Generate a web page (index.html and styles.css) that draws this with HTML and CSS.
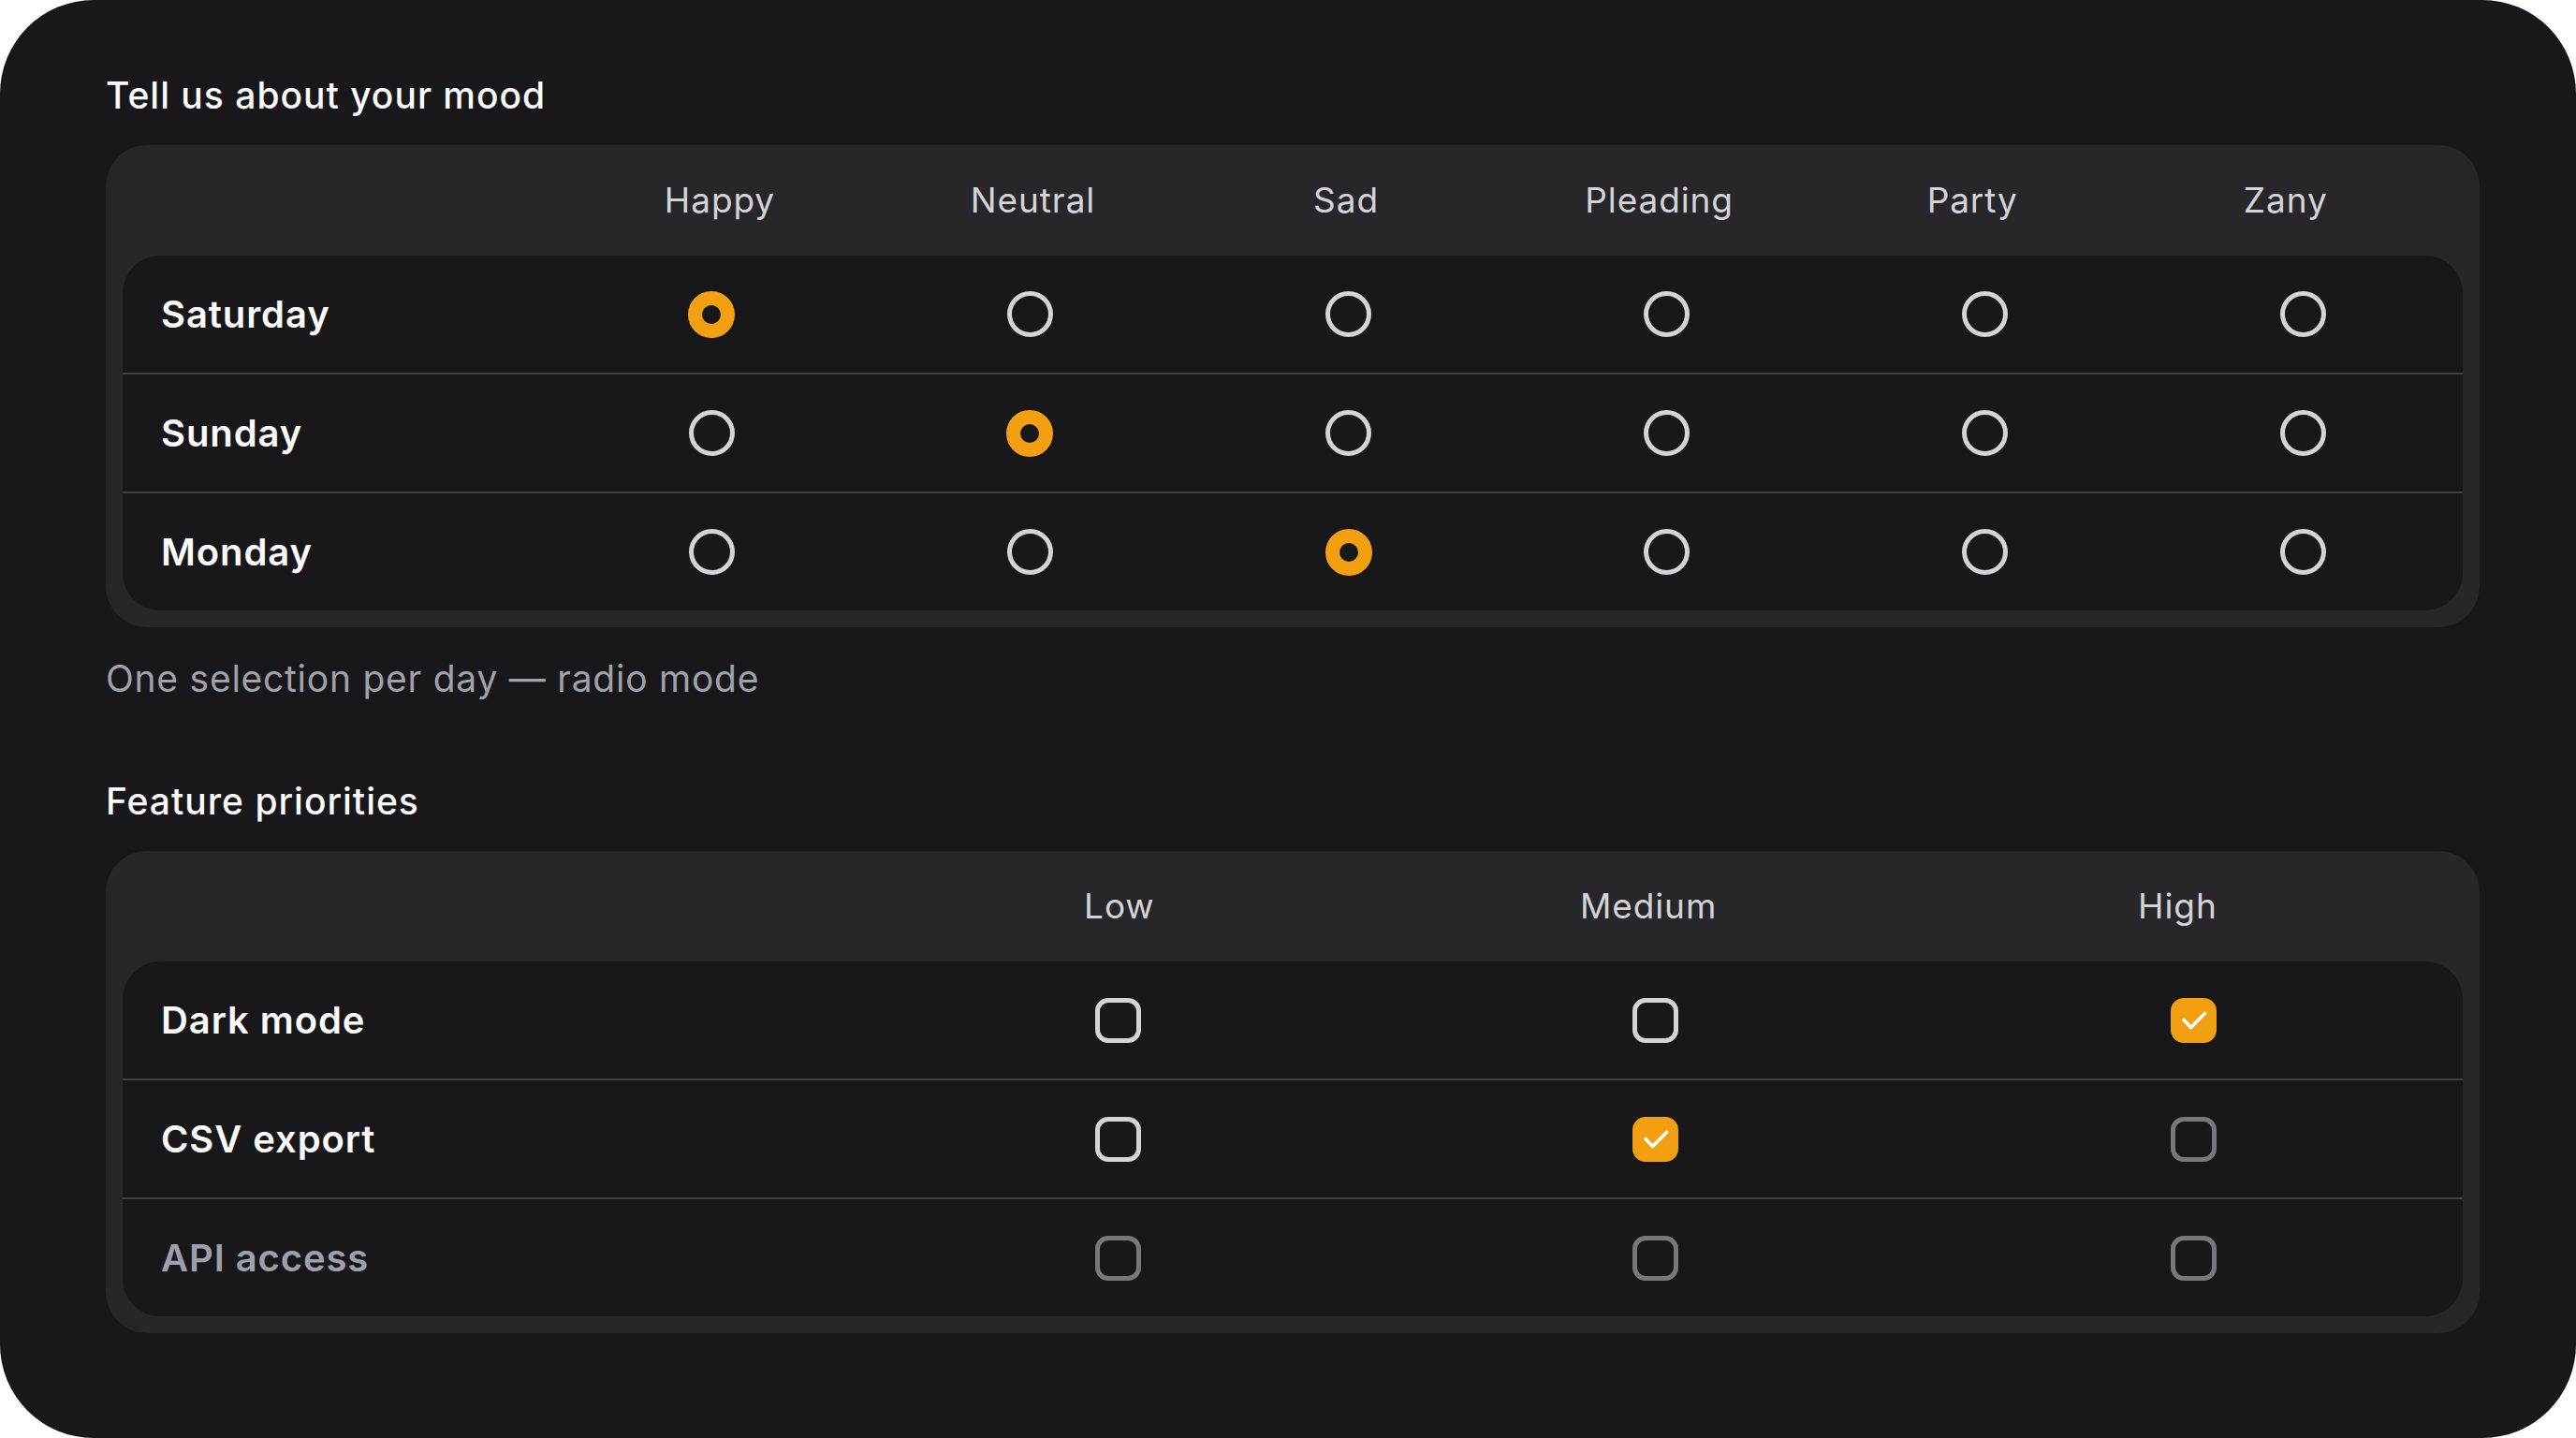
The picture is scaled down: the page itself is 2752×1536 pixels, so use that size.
FILE: index.html
```html
<!DOCTYPE html>
<html lang="en">
<head>
<meta charset="utf-8">
<title>Matrix inputs</title>
<link rel="stylesheet" href="styles.css">
</head>
<body>
<main class="card">
  <h2 class="section-title">Tell us about your mood</h2>
  <section class="panel">
    <div class="grid head mood">
      <span></span>
      <span class="col">Happy</span>
      <span class="col">Neutral</span>
      <span class="col">Sad</span>
      <span class="col">Pleading</span>
      <span class="col">Party</span>
      <span class="col">Zany</span>
    </div>
    <div class="rows">
      <div class="grid row mood">
        <span class="label">Saturday</span>
        <span class="cell"><span class="radio on"></span></span>
        <span class="cell"><span class="radio"></span></span>
        <span class="cell"><span class="radio"></span></span>
        <span class="cell"><span class="radio"></span></span>
        <span class="cell"><span class="radio"></span></span>
        <span class="cell"><span class="radio"></span></span>
      </div>
      <div class="grid row mood">
        <span class="label">Sunday</span>
        <span class="cell"><span class="radio"></span></span>
        <span class="cell"><span class="radio on"></span></span>
        <span class="cell"><span class="radio"></span></span>
        <span class="cell"><span class="radio"></span></span>
        <span class="cell"><span class="radio"></span></span>
        <span class="cell"><span class="radio"></span></span>
      </div>
      <div class="grid row mood">
        <span class="label">Monday</span>
        <span class="cell"><span class="radio"></span></span>
        <span class="cell"><span class="radio"></span></span>
        <span class="cell"><span class="radio on"></span></span>
        <span class="cell"><span class="radio"></span></span>
        <span class="cell"><span class="radio"></span></span>
        <span class="cell"><span class="radio"></span></span>
      </div>
    </div>
  </section>
  <p class="note">One selection per day — radio mode</p>

  <h2 class="section-title second">Feature priorities</h2>
  <section class="panel">
    <div class="grid head prio">
      <span></span>
      <span class="col">Low</span>
      <span class="col">Medium</span>
      <span class="col">High</span>
    </div>
    <div class="rows">
      <div class="grid row prio">
        <span class="label">Dark mode</span>
        <span class="cell"><span class="box"></span></span>
        <span class="cell"><span class="box"></span></span>
        <span class="cell"><span class="box on"><svg viewBox="0 0 48 48" width="48" height="48"><path d="M13 23.5 L20.5 31.5 L35.5 16.5" /></svg></span></span>
      </div>
      <div class="grid row prio">
        <span class="label">CSV export</span>
        <span class="cell"><span class="box"></span></span>
        <span class="cell"><span class="box on"><svg viewBox="0 0 48 48" width="48" height="48"><path d="M13 23.5 L20.5 31.5 L35.5 16.5" /></svg></span></span>
        <span class="cell"><span class="box off"></span></span>
      </div>
      <div class="grid row prio disabled">
        <span class="label">API access</span>
        <span class="cell"><span class="box off"></span></span>
        <span class="cell"><span class="box off"></span></span>
        <span class="cell"><span class="box off"></span></span>
      </div>
    </div>
  </section>
</main>
</body>
</html>
```
FILE: styles.css
```css
* { box-sizing: border-box; }

html, body {
  margin: 0;
  padding: 0;
  background: #ffffff;
}

body {
  width: 2752px;
  height: 1536px;
  font-family: Inter, "Noto Sans", "Liberation Sans", sans-serif;
}

.card {
  width: 2752px;
  height: 1536px;
  background: #18181b;
  border-radius: 100px;
  padding: 78px 103px 0 113px;
  display: flex;
  flex-direction: column;
}

.section-title {
  margin: 0 0 29px 0;
  font-size: 39px;
  line-height: 48px;
  font-weight: 500;
  color: #fafafa;
  letter-spacing: 1px;
}

.section-title.second {
  margin-top: 83px;
}

.note {
  margin: 31px 0 0 0;
  font-size: 39px;
  line-height: 48px;
  font-weight: 400;
  color: #a1a1aa;
  letter-spacing: 0.75px;
}

.panel {
  background: #27272a;
  border-radius: 44px;
  padding: 0 18px 18px 18px;
  display: flex;
  flex-direction: column;
}

.grid {
  display: grid;
  align-items: center;
}

.grid.mood { grid-template-columns: 1.35fr repeat(6, 1fr); }
.grid.prio { grid-template-columns: 1.35fr repeat(3, 1fr); }

.head {
  height: 118px;
  margin: 0 22px 0 19px;
}

.head .col {
  text-align: center;
  font-size: 37px;
  line-height: 46px;
  color: #d4d4d8;
  font-weight: 400;
  letter-spacing: 0.9px;
}

.rows {
  background: #18181b;
  border-radius: 40px;
  overflow: hidden;
}

.row {
  height: 125px;
}

.row + .row {
  border-top: 2px solid #3f3f46;
  height: 127px;
}

.label {
  padding-left: 41px;
  font-size: 40px;
  line-height: 48px;
  font-weight: 600;
  color: #fafafa;
  letter-spacing: 0.9px;
}

.disabled .label {
  color: #9ca0ab;
}

.cell {
  display: flex;
  justify-content: center;
  align-items: center;
}

.radio {
  width: 49px;
  height: 49px;
  border-radius: 50%;
  border: 5px solid #d4d4d8;
}

.radio.on {
  width: 50px;
  height: 50px;
  border: 15px solid #f39f12;
  background: #18181b;
}

.box {
  width: 49px;
  height: 48px;
  border-radius: 14px;
  border: 5px solid #d4d4d8;
  display: flex;
  align-items: center;
  justify-content: center;
}

.box.off {
  border-color: #77777c;
}

.box.on {
  border: none;
  background: #f39f12;
}

.box svg {
  display: block;
  fill: none;
  stroke: #ffffff;
  stroke-width: 3.6;
  stroke-linecap: round;
  stroke-linejoin: round;
}
```
